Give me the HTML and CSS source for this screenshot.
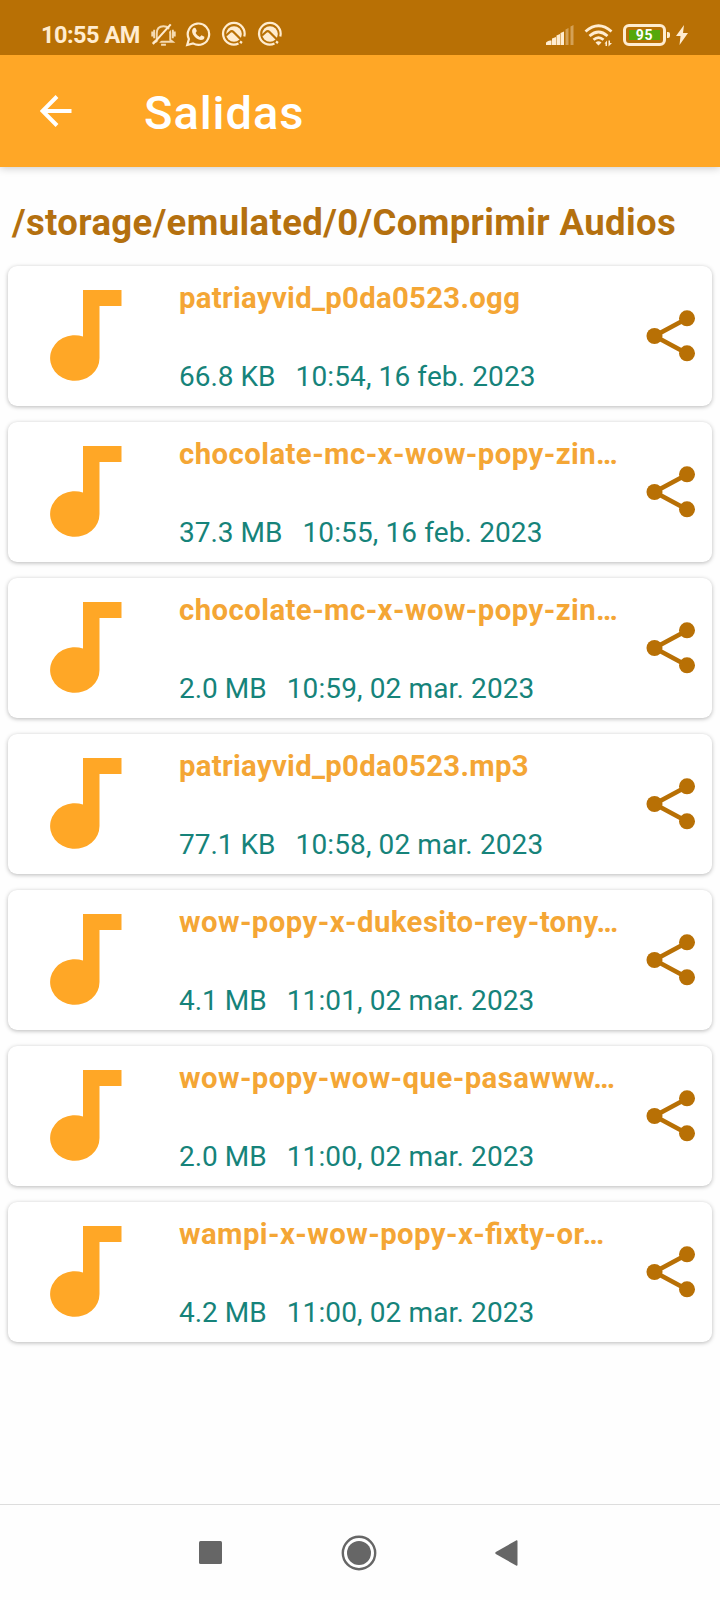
FILE: index.html
```html
<!DOCTYPE html>
<html lang="es">
<head>
<meta charset="utf-8">
<title>Salidas</title>
<link rel="stylesheet" href="styles.css">
</head>
<body>
<svg class="defs" width="0" height="0" aria-hidden="true">
  <symbol id="note" viewBox="0 0 72 92"><path d="M33 0H71.500V16H49.500V67.500A24.700 22.800 0 1 1 33 46.500Z"/></symbol>
  <symbol id="share" viewBox="0 0 50 52"><path class="share-line" d="M41 8.500 8.500 26 41 43.500"/><circle cx="8.500" cy="26" r="8"/><circle cx="41" cy="8.300" r="8"/><circle cx="41" cy="43.300" r="8"/></symbol>
  <symbol id="disc" viewBox="0 0 26 26"><path class="stroke" d="M17.500 22.500A10.800 10.800 0 1 1 23.300 15.500"/><circle cx="13" cy="13" r="7.800"/><path class="gap" d="M5 14.500 9.500 10.500Q11 9.500 12.500 11L21 19.500"/><path class="stroke" d="m19 20.500 2 1.500"/></symbol>
</svg>
<div class="screen">
  <header class="status">
    <span class="clock">10:55 AM</span>
    <svg class="bell" viewBox="0 0 26 26"><path class="stroke thin" d="M6 18.500V12Q6 4.500 13 4.500Q20 4.500 20 12V18.500L22.500 20.500H3.500ZM10.500 23.700H15.500M1.300 10V15M3.300 8V17M24.700 10V15M22.700 8V17"/><path class="gap" d="M5 24 23 4"/><path class="stroke" d="M2 23 20.500 2.500"/></svg>
    <svg class="whatsapp" viewBox="0 0 26 26"><path class="stroke" d="m2.200 24 1.700-6A10.700 10.700 0 1 1 8 22.400Z"/><path d="M9 6.800Q10.500 6.500 11 8L11.800 10 10.600 12Q12 15 14.800 15.900L16.500 14.300 19.400 15.700Q19.600 19 15.800 19 11.500 18.800 8 13.500 5.700 8.800 9 6.800Z"/></svg>
    <svg class="disc" viewBox="0 0 26 26"><use href="#disc"/></svg>
    <svg class="disc" viewBox="0 0 26 26"><use href="#disc"/></svg>
    <span class="spacer"></span>
    <svg class="signal" viewBox="0 0 28 20"><path d="M0 20v-2q0-1.500 4-2.500l1.500 0V20ZM6 13.500l4-1.500V20H6ZM10.500 10.500l3.500-1.500V20h-3.500ZM14.500 8l3.500-1.500V20h-3.500Z"/><path class="dim" d="M19.500 4.500l3-1.500V20h-3ZM24.500 1.500l3-1.500V20h-3Z"/></svg>
    <svg class="wifi" viewBox="0 0 29 23"><path class="wave" d="M1.500 7.500Q14.500-4 27.500 7.500M5.500 12Q14.500 4 23.500 12M9.500 15.800Q14.500 11.500 19.500 15.800"/><path d="M11.500 18.500Q14.500 16 17.500 18.500L14.500 21.500ZM20.500 19.500 23 16.500V22H21.500V19.500ZM24.500 16.500H26V19H28L24.500 22.500Z"/></svg>
    <span class="battery"><span class="charge">95</span></span>
    <span class="terminal"></span>
    <svg class="bolt" viewBox="0 0 12 20"><path d="M8 0 0 11H4.500L3.500 20 12 8H7Z"/></svg>
  </header>
  <div class="appbar">
    <svg class="back" viewBox="0 0 32 32"><path d="M31.500 16H2M17 1.500 2.500 16 17 30.500"/></svg>
    <h1 class="title">Salidas</h1>
  </div>
  <main class="content">
    <h2 class="path">/storage/emulated/0/Comprimir Audios</h2>
    <ul class="list">
      <li class="card"><svg class="note"><use href="#note"/></svg><div class="info"><div class="name">patriayvid_p0da0523.ogg</div><div class="meta"><span>66.8 KB</span><span>10:54, 16 feb. 2023</span></div></div><svg class="share"><use href="#share"/></svg></li>
      <li class="card"><svg class="note"><use href="#note"/></svg><div class="info"><div class="name long">chocolate-mc-x-wow-popy-zin…</div><div class="meta"><span>37.3 MB</span><span>10:55, 16 feb. 2023</span></div></div><svg class="share"><use href="#share"/></svg></li>
      <li class="card"><svg class="note"><use href="#note"/></svg><div class="info"><div class="name long">chocolate-mc-x-wow-popy-zin…</div><div class="meta"><span>2.0 MB</span><span>10:59, 02 mar. 2023</span></div></div><svg class="share"><use href="#share"/></svg></li>
      <li class="card"><svg class="note"><use href="#note"/></svg><div class="info"><div class="name">patriayvid_p0da0523.mp3</div><div class="meta"><span>77.1 KB</span><span>10:58, 02 mar. 2023</span></div></div><svg class="share"><use href="#share"/></svg></li>
      <li class="card"><svg class="note"><use href="#note"/></svg><div class="info"><div class="name long">wow-popy-x-dukesito-rey-tony…</div><div class="meta"><span>4.1 MB</span><span>11:01, 02 mar. 2023</span></div></div><svg class="share"><use href="#share"/></svg></li>
      <li class="card"><svg class="note"><use href="#note"/></svg><div class="info"><div class="name long">wow-popy-wow-que-pasawww…</div><div class="meta"><span>2.0 MB</span><span>11:00, 02 mar. 2023</span></div></div><svg class="share"><use href="#share"/></svg></li>
      <li class="card"><svg class="note"><use href="#note"/></svg><div class="info"><div class="name long">wampi-x-wow-popy-x-fixty-or…</div><div class="meta"><span>4.2 MB</span><span>11:00, 02 mar. 2023</span></div></div><svg class="share"><use href="#share"/></svg></li>
    </ul>
  </main>
  <nav class="navbar">
    <svg class="recent" viewBox="0 0 23 23"><rect width="23" height="23" rx="1.500"/></svg>
    <svg class="home" viewBox="0 0 36 36"><circle class="ring" cx="18" cy="18" r="16.200"/><circle cx="18" cy="18" r="12"/></svg>
    <svg class="prev" viewBox="0 0 23 26"><path d="M21.500 .3Q22.500 0 22.500 1.500V24.500Q22.500 26 21.500 25.700L.8 14Q-.3 13 .8 12Z"/></svg>
  </nav>
</div>
</body>
</html>
```
FILE: styles.css
```css
* { box-sizing: border-box; }
body { margin: 0; background: #fefefe; font-family: Roboto, "Liberation Sans", sans-serif; }
svg { display: block; flex: none; fill: currentColor; }
.defs { position: absolute; }
.screen { display: flex; flex-direction: column; width: 720px; height: 1600px; overflow: hidden; }
.status { position: relative; z-index: 1; display: flex; align-items: flex-start; height: 55px; padding: 20px 32px 0 41px; background: #b87005; color: #ffecd0; }
.clock { width: 110px; font-size: 23.5px; line-height: 30px; font-weight: 700; letter-spacing: -.5px; white-space: nowrap; }
.stroke { fill: none; stroke: currentColor; stroke-width: 2.2; }
.thin { stroke-width: 2; opacity: .85; }
.gap { fill: none; stroke: #b87005; stroke-width: 2.2; }
.bell { width: 25px; height: 25px; margin-top: 2px; }
.whatsapp { width: 26px; height: 26px; margin: 1px 0 0 9px; }
.disc { width: 26px; height: 26px; margin: 1px 0 0 10px; }
.spacer { flex: 1; }
.signal { width: 28px; height: 20px; margin: 5px 0 0; }
.dim { opacity: .4; }
.wifi { width: 29px; height: 23px; margin: 4px 0 0 10px; }
.wave { fill: none; stroke: currentColor; stroke-width: 2.8; }
.battery { width: 43px; height: 22px; margin: 4px 0 0 10px; padding: 3px; border: 3px solid currentColor; border-radius: 6px; }
.charge { display: block; height: 10px; background: #55a80b; color: #fff; font-size: 14px; font-weight: 700; line-height: 10px; text-align: center; letter-spacing: .6px; }
.terminal { width: 3px; height: 6px; margin: 12px 6px 0 1px; background: currentColor; border-radius: 0 2px 2px 0; }
.bolt { width: 12px; height: 20px; margin-top: 5px; }
.appbar { display: flex; align-items: center; height: 112px; padding: 0 40px; background: #ffa726; color: #fff; box-shadow: 0 1px 8px rgba(0,0,0,.22); }
.back { width: 32px; height: 32px; }
.back path { fill: none; stroke: currentColor; stroke-width: 4; }
.title { margin: 3px 0 0 72px; font-size: 47px; line-height: 56px; font-weight: 500; letter-spacing: .95px; }
.content { flex: 1; padding: 35px 8px 0; }
.path { margin: 0 0 22px; padding-left: 4px; font-size: 36.5px; line-height: 42px; font-weight: 700; color: #b4700f; letter-spacing: .38px; white-space: nowrap; }
.list { display: flex; flex-direction: column; gap: 16px; margin: 0; padding: 0; list-style: none; }
.card { display: flex; height: 140px; padding: 0 16.5px 0 42px; background: #fff; border-radius: 9px; box-shadow: 0 1px 4px rgba(0,0,0,.28); }
.note { width: 72px; height: 92px; margin-top: 24px; color: #ffa726; }
.info { flex: 1; min-width: 0; padding: 15px 0 0 57px; white-space: nowrap; }
.name { font-size: 29.3px; line-height: 34px; font-weight: 700; color: #f4a635; letter-spacing: .31px; font-feature-settings: "liga" 1; }
.name.long { letter-spacing: .44px; }
.meta { display: flex; gap: 20px; margin-top: 45px; font-size: 28px; line-height: 33px; color: #16837a; }
.meta span:last-child { letter-spacing: .12px; }
.share { width: 50px; height: 52px; margin-top: 44px; color: #b87005; }
.share-line { fill: none; stroke: currentColor; stroke-width: 4.6; }
.navbar { display: flex; align-items: center; height: 96px; padding: 0 202px 0 199px; justify-content: space-between; border-top: 1px solid #ddd; color: #666; }
.recent { width: 23px; height: 23px; }
.home { width: 36px; height: 36px; }
.prev { width: 23px; height: 26px; }
.ring { fill: none; stroke: currentColor; stroke-width: 2.4; }
```
